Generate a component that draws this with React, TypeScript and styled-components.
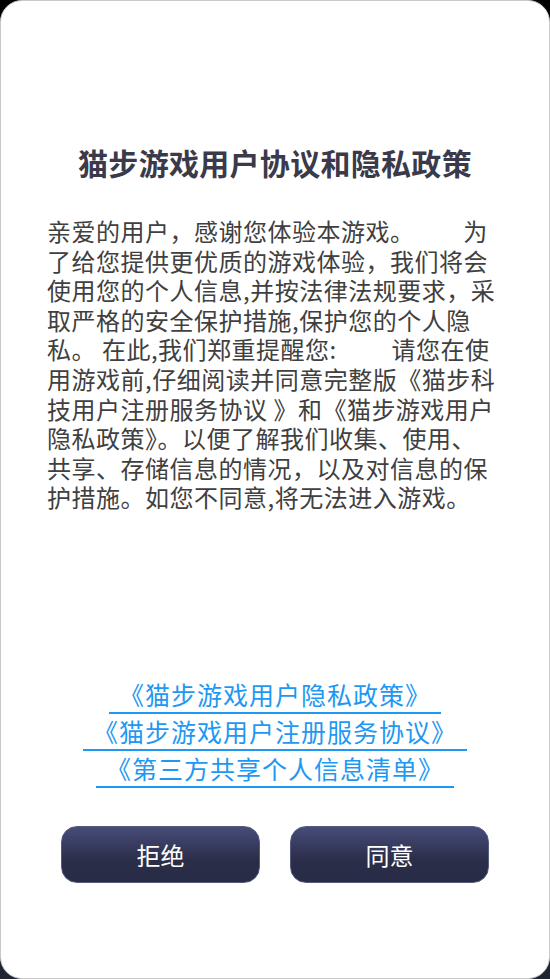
import React from 'react';
import styled, {createGlobalStyle} from 'styled-components';

const GlobalStyle = createGlobalStyle`
    html, body {
        margin: 0;
        padding: 0;
        height: 100%;
        background: linear-gradient(#000000, #1f2531);
    }
    #root {
        height: 100%;
    }
    * {
        box-sizing: border-box;
    }
`;

const Card = styled.div`
    height: 100vh;
    background: #ffffff;
    border: 1px solid #c9c9c9;
    border-radius: 22px;
    display: flex;
    flex-direction: column;
    padding: 141px 0 95px;
    font-family: "Noto Sans CJK SC", "Noto Sans", sans-serif;
`;

const Title = styled.h1`
    margin: 0;
    font-size: 30px;
    line-height: 40px;
    font-weight: 700;
    letter-spacing: 0.3px;
    color: #3b3a4a;
    text-align: center;
`;

const Body = styled.p`
    margin: 34px 0 0;
    padding: 0 40px 0 46px;
    font-size: 24px;
    line-height: 29.6px;
    letter-spacing: 0.5px;
    color: #404040;
    white-space: pre;
`;

const Links = styled.div`
    margin-top: auto;
    display: flex;
    flex-direction: column;
    align-items: center;
`;

const DocLink = styled.a`
    display: block;
    padding: 0 10px;
    font-size: 25px;
    line-height: 35px;
    letter-spacing: 1px;
    color: #1e98f2;
    text-decoration: none;
    border-bottom: 2px solid #1e98f2;
    cursor: pointer;
`;

const Buttons = styled.div`
    margin-top: 38px;
    display: flex;
    justify-content: center;
    gap: 30px;
`;

const Button = styled.button`
    width: 199px;
    height: 57px;
    border: 1px solid #555a82;
    border-radius: 16px;
    background: linear-gradient(#474c79, #2b2e49 60%, #282b45);
    color: #ffffff;
    font-family: inherit;
    font-size: 24px;
    cursor: pointer;
`;

const lines = [
    '亲爱的用户，感谢您体验本游戏。\u3000\u3000  为',
    '了给您提供更优质的游戏体验，我们将会',
    '使用您的个人信息,并按法律法规要求，采',
    '取严格的安全保护措施,保护您的个人隐',
    '私。 在此,我们郑重提醒您:\u3000\u3000 请您在使',
    '用游戏前,仔细阅读并同意完整版《猫步科',
    '技用户注册服务协议 》和《猫步游戏用户',
    '隐私政策》。以便了解我们收集、使用、',
    '共享、存储信息的情况，以及对信息的保',
    '护措施。如您不同意,将无法进入游戏。',
];

const docs = [
    '《猫步游戏用户隐私政策》',
    '《猫步游戏用户注册服务协议》',
    '《第三方共享个人信息清单》',
];

export default function App() {
    return (
        <>
            <GlobalStyle/>
            <Card>
                <Title>猫步游戏用户协议和隐私政策</Title>
                <Body>
                    {lines.map((line, i) => (
                        <React.Fragment key={i}>
                            {line}
                            {i < lines.length - 1 && <br/>}
                        </React.Fragment>
                    ))}
                </Body>
                <Links>
                    {docs.map((doc) => (
                        <DocLink key={doc}>{doc}</DocLink>
                    ))}
                </Links>
                <Buttons>
                    <Button>拒绝</Button>
                    <Button>同意</Button>
                </Buttons>
            </Card>
        </>
    );
}
